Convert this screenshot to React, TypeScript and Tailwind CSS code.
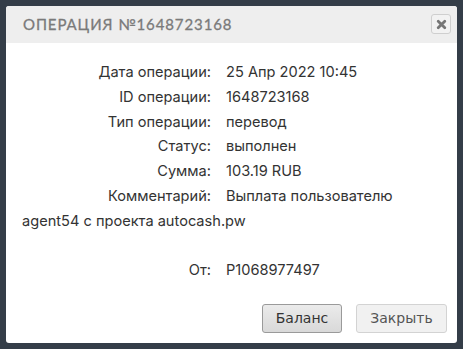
import React from "react";

const rows: [string, string][] = [
  ["Дата операции:", "25 Апр 2022 10:45"],
  ["ID операции:", "1648723168"],
  ["Тип операции:", "перевод"],
  ["Статус:", "выполнен"],
  ["Сумма:", "103.19 RUB"],
];

export default function App() {
  return (
    <div className="w-[463px] h-[349px] bg-[#343d48] pt-[6px] pl-[6px]">
      <div className="w-[451px] h-[337px] bg-white rounded-[3px] overflow-hidden flex flex-col">
        <div className="h-[37px] bg-[#eeeeee] flex items-center justify-between pl-[17px] pr-[6px]">
          <div
            className="text-[15px] text-[#7a7a7a] tracking-[0.9px] uppercase"
            style={{ fontFamily: "Lato, 'DejaVu Sans', sans-serif", fontWeight: 400, WebkitTextStroke: "0.3px #7a7a7a" }}
          >
            Операция №1648723168
          </div>
          <div className="w-[20px] h-[20px] mt-[-1px] border border-[#cfcfcf] rounded-[3px] bg-[#f2f2f2] flex items-center justify-center">
            <svg width="11" height="11" viewBox="0 0 11 11">
              <path d="M2.2 2.2 L8.8 8.8 M8.8 2.2 L2.2 8.8" stroke="#767676" strokeWidth="2.8" strokeLinecap="round" />
            </svg>
          </div>
        </div>
        <div
          className="flex-1 pt-[17px] pl-[16px] pr-[16px] text-[14.6px] leading-[24.8px] text-[#333333]"
          style={{ fontFamily: "Inter, 'Liberation Sans', sans-serif" }}
        >
          {rows.map(([l, v]) => (
            <div key={l}>
              <span className="inline-block w-[204px] pr-[15px] text-right">{l}</span>
              <span>{v}</span>
            </div>
          ))}
          <div>
            <span className="inline-block w-[204px] pr-[15px] text-right">Комментарий:</span>
            <span>Выплата пользователю</span>
          </div>
          <div>agent54 с проекта autocash.pw</div>
          <div>&nbsp;</div>
          <div>
            <span className="inline-block w-[204px] pr-[15px] text-right">От:</span>
            <span>P1068977497</span>
          </div>
        </div>
        <div className="flex justify-end gap-[14px] pr-[10px] pb-[10px]">
          <button
            className="w-[80px] h-[29px] rounded-[3px] border border-[#9a9a9a] bg-gradient-to-b from-[#ebebeb] to-[#d9d9d9] text-[14px] text-[#333]"
            style={{ fontFamily: "'DejaVu Sans', Verdana, sans-serif" }}
          >
            Баланс
          </button>
          <button
            className="w-[91px] h-[29px] rounded-[3px] border border-[#d3d3d3] bg-[#f1f1f1] text-[14px] text-[#555]"
            style={{ fontFamily: "'DejaVu Sans', Verdana, sans-serif" }}
          >
            Закрыть
          </button>
        </div>
      </div>
    </div>
  );
}
